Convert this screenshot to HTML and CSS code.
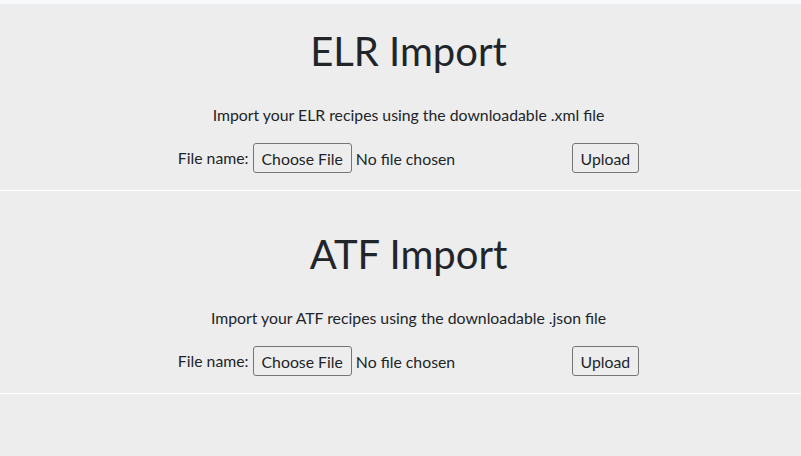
FILE: index.html
```html
<!DOCTYPE html>
<html>
<head>
<meta charset="utf-8">
<link rel="stylesheet" href="styles.css">
</head>
<body>
<div class="topbar"></div>
<main class="page">
  <section class="import">
    <h1 class="title">ELR Import</h1>
    <p class="desc">Import your ELR recipes using the downloadable .xml file</p>
    <form class="form">
      <label class="label">File name:</label>
      <input class="file" type="file">
      <button class="upload" type="button">Upload</button>
    </form>
  </section>
  <hr class="sep">
  <section class="import">
    <h1 class="title">ATF Import</h1>
    <p class="desc">Import your ATF recipes using the downloadable .json file</p>
    <form class="form">
      <label class="label">File name:</label>
      <input class="file" type="file">
      <button class="upload" type="button">Upload</button>
    </form>
  </section>
  <hr class="sep">
</main>
</body>
</html>
```
FILE: styles.css
```css
html, body {
  margin: 0;
  padding: 0;
}
body {
  background: #ededed;
  color: #212529;
  font-family: Lato, "Open Sans", sans-serif;
  font-size: 15.8px;
  line-height: 1.5;
  min-height: 456px;
}
.topbar {
  height: 4px;
  background: #f6f8fa;
}
.page {
  display: flex;
  flex-direction: column;
}
.import {
  padding: 23px 0 0 16px;
  display: flex;
  flex-direction: column;
  align-items: center;
}
.title {
  margin: 0;
  font-size: 40px;
  font-weight: 400;
  line-height: 48px;
}
.desc {
  margin: 28px 0 0;
  font-size: 15.8px;
  line-height: 24px;
}
.form {
  margin-top: 16px;
  display: flex;
  align-items: center;
  height: 30px;
}
.label {
  margin-right: 4px;
}
.file {
  font-family: Lato, sans-serif;
  font-size: 15.8px;
  width: 315px;
  color: #212529;
}
.file::file-selector-button {
  font-family: Lato, sans-serif;
  font-size: 15.8px;
  height: 30px;
  padding: 0 8px;
  margin-right: 4px;
  background: #ededed;
  border: 1px solid #767676;
  border-radius: 3px;
  color: #212529;
}
.upload {
  font-family: Lato, sans-serif;
  font-size: 15.8px;
  height: 30px;
  padding: 0 8px;
  margin-left: 4px;
  background: #ededed;
  border: 1px solid #767676;
  border-radius: 3px;
  color: #212529;
}
.sep {
  margin: 17px 0 16px;
  border: 0;
  border-top: 1px solid #ffffff;
  height: 0;
}
```
